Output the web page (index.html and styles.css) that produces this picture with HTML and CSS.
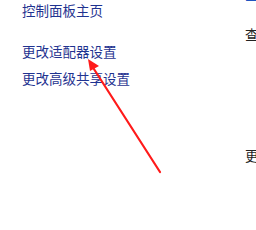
FILE: index.html
```html
<!DOCTYPE html>
<html lang="zh-CN">
  <head>
    <meta charset="UTF-8" />
    <title>网络和共享中心</title>
    <link rel="stylesheet" href="styles.css">
  </head>
  <body>
    <div class="window">
      <div class="nav">
        <a class="nav-link first">控制面板主页</a>
        <a class="nav-link second">更改适配器设置</a>
        <a class="nav-link third">更改高级共享设置</a>
      </div>
      <div class="main">
        <a class="main-link">查看基本网络信息</a>
        <div class="main-text">查看活动网络</div>
        <div class="main-text lower">更改网络设置</div>
      </div>
    </div>
    <svg class="arrow" width="256" height="230" viewBox="0 0 256 230">
      <line x1="160" y1="172" x2="92" y2="66" stroke="#ff1a1a" stroke-width="2.2" stroke-linecap="round"/>
      <polygon points="88,59 99,66 90,71" fill="#ff1a1a"/>
    </svg>
  </body>
</html>
```
FILE: styles.css
```css
* {
  margin: 0;
  padding: 0;
  box-sizing: border-box;
}
body {
  width: 256px;
  height: 230px;
  overflow: hidden;
  background-color: #fff;
  font-family: "Noto Sans CJK SC", "Liberation Sans", sans-serif;
  font-size: 13.5px;
  position: relative;
}
.window {
  display: flex;
  width: 400px;
}
.nav {
  display: flex;
  flex-direction: column;
  width: 245px;
  padding-left: 22px;
}
.nav-link {
  display: block;
  line-height: 20px;
  color: #1f3390;
}
.second { margin-top: 21px; }
.third { margin-top: 7px; }
.main {
  display: flex;
  flex-direction: column;
}
.main-link {
  display: block;
  line-height: 20px;
  margin-top: -16px;
  color: #1f55c0;
}
.main-text {
  line-height: 20px;
  margin-top: 20px;
  color: #222;
}
.main-text.lower { margin-top: 101px; }
.arrow {
  position: absolute;
  left: 0;
  top: 0;
}
```
